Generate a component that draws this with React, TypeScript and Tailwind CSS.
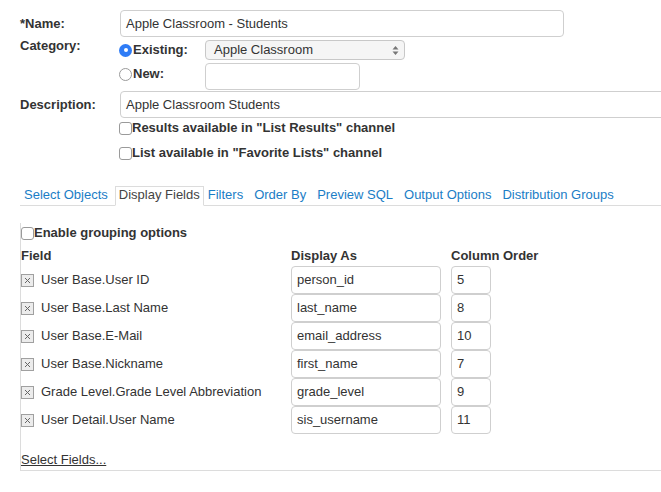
const font = { fontFamily: '"Liberation Sans", Arial, sans-serif' };

const rows = [
  { field: 'User Base.User ID', as: 'person_id', order: '5' },
  { field: 'User Base.Last Name', as: 'last_name', order: '8' },
  { field: 'User Base.E-Mail', as: 'email_address', order: '10' },
  { field: 'User Base.Nickname', as: 'first_name', order: '7' },
  { field: 'Grade Level.Grade Level Abbreviation', as: 'grade_level', order: '9' },
  { field: 'User Detail.User Name', as: 'sis_username', order: '11' },
];

const tabs = ['Select Objects', 'Display Fields', 'Filters', 'Order By', 'Preview SQL', 'Output Options', 'Distribution Groups'];

function Box() {
  return <span className="inline-block w-[13px] h-[13px] shrink-0 rounded-[3px] border border-[#9a9a9a] bg-white" />;
}

function Radio({ on }: { on?: boolean }) {
  return on ? (
    <span className="flex w-[13px] h-[13px] shrink-0 items-center justify-center rounded-full bg-[#2f7cf6]">
      <span className="w-[4px] h-[4px] rounded-full bg-white" />
    </span>
  ) : (
    <span className="inline-block w-[13px] h-[13px] shrink-0 rounded-full border border-[#9a9a9a] bg-white" />
  );
}

function XBox() {
  return (
    <span className="flex w-[13px] h-[13px] shrink-0 items-center justify-center border border-[#a0a0a0] bg-[#ececec]">
      <svg width="7" height="7" viewBox="0 0 7 7">
        <path d="M1 1L6 6M6 1L1 6" stroke="#666" strokeWidth="1" />
      </svg>
    </span>
  );
}

function Input({ value, className }: { value: string; className: string }) {
  return (
    <div className={`flex shrink-0 items-center rounded-[4px] border border-[#cfcfcf] bg-white px-[5px] text-[13px] text-[#333] ${className}`}>
      {value}
    </div>
  );
}

export default function App() {
  return (
    <div style={font} className="w-[661px] h-[492px] overflow-hidden bg-white text-[13px] leading-[16px] text-[#333]">
      <div className="pl-[20px] pt-[10px]">
        {/* Name */}
        <div className="flex items-center h-[27px]">
          <div className="w-[100px] shrink-0 font-bold">*Name:</div>
          <Input value="Apple Classroom - Students" className="w-[444px] h-[27px]" />
        </div>

        {/* Category */}
        <div className="flex">
          <div className="w-[100px] shrink-0 font-bold pt-[1px]">Category:</div>
          <div className="flex flex-col">
            <div className="flex items-center h-[26px] -ml-[1px]">
              <Radio on />
              <span className="w-[73px] font-bold pl-[1px]">Existing:</span>
              <div className="flex items-center justify-between w-[200px] h-[20px] rounded-[4px] border border-[#c8c8c8] bg-[#f5f5f5] pl-[8px] pr-[5px]">
                <span>Apple Classroom</span>
                <svg width="7" height="11" viewBox="0 0 7 11">
                  <path d="M3.5 1L6.5 4.5H0.5Z M3.5 10L6.5 6.5H0.5Z" fill="#777" />
                </svg>
              </div>
            </div>
            <div className="flex h-[28px] -ml-[1px]">
              <div className="flex items-center h-[16px] mt-[3px]">
                <Radio />
                <span className="w-[73px] font-bold pl-[1px]">New:</span>
              </div>
              <Input value="" className="w-[155px] h-[27px]" />
            </div>
          </div>
        </div>

        {/* Description */}
        <div className="flex items-center h-[27px]">
          <div className="w-[100px] shrink-0 font-bold">Description:</div>
          <Input value="Apple Classroom Students" className="w-[570px] h-[27px]" />
        </div>

        <div className="pl-[99px]">
          <div className="flex items-center h-[20px]">
            <Box />
            <span className="font-bold">Results available in "List Results" channel</span>
          </div>
          <div className="flex items-center h-[20px] mt-[5px]">
            <Box />
            <span className="font-bold">List available in "Favorite Lists" channel</span>
          </div>
        </div>

        {/* Tabs */}
        <div className="mt-[23px] flex items-end border-b border-[#dcdcdc]">
          {tabs.map((t) =>
            t === 'Display Fields' ? (
              <div key={t} className="-mb-[1px] border border-b-white border-[#dcdcdc] bg-white px-[3px] pb-[2px] text-[#444]">
                {t}
              </div>
            ) : (
              <div key={t} className="mr-[3px] px-[4px] pb-[2px] text-[#1a7dc6]">
                {t}
              </div>
            ),
          )}
        </div>

        {/* Panel */}
        <div className="border-l border-b border-[#dcdcdc] pb-[2px]">
          <div className="mt-[17px] flex items-center h-[20px]">
            <Box />
            <span className="font-bold">Enable grouping options</span>
          </div>
          <div className="flex h-[23px] pt-[5px] font-bold">
            <span className="w-[270px]">Field</span>
            <span className="w-[160px]">Display As</span>
            <span>Column Order</span>
          </div>
          {rows.map((r) => (
            <div key={r.field} className="flex items-center h-[28px]">
              <div className="flex items-center gap-[7px] w-[270px] shrink-0">
                <XBox />
                <span>{r.field}</span>
              </div>
              <Input value={r.as} className="w-[150px] h-[28px]" />
              <Input value={r.order} className="ml-[10px] w-[40px] h-[28px]" />
            </div>
          ))}
          <div className="mt-[18px] h-[16px]">
            <span className="underline">Select Fields...</span>
          </div>
        </div>
      </div>
    </div>
  );
}
